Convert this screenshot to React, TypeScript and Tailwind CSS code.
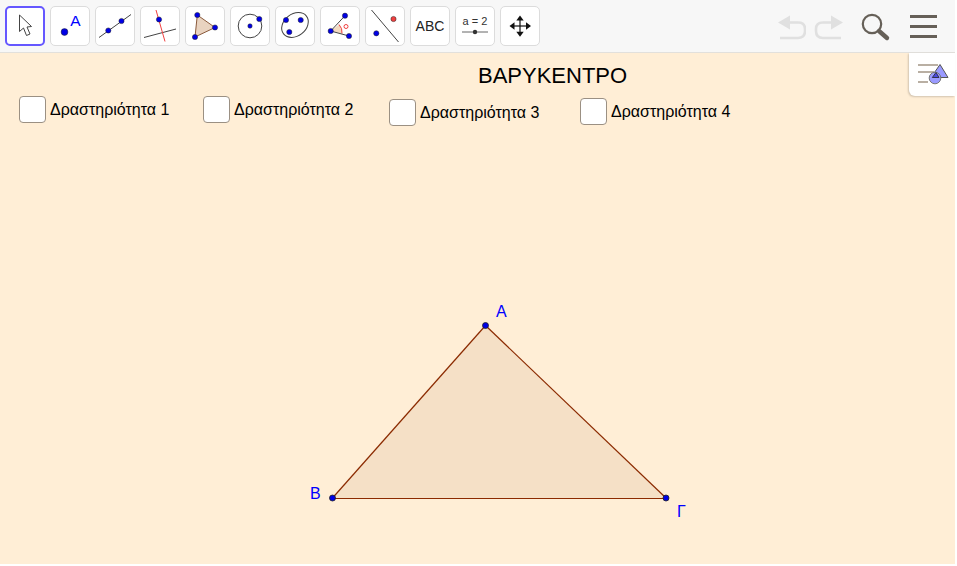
import React from "react";

const BLUE = "#0000e6";
const P = ({ x, y, r = 2.6, c = BLUE }: { x: number; y: number; r?: number; c?: string }) => (
  <circle cx={x} cy={y} r={r} fill={c} stroke="#222" strokeWidth={0.5} />
);

const L = ({ x1, y1, x2, y2, c = "#444", w = 1 }: { x1: number; y1: number; x2: number; y2: number; c?: string; w?: number }) => (
  <line x1={x1} y1={y1} x2={x2} y2={y2} stroke={c} strokeWidth={w} />
);

// Each icon is drawn in page coordinates; the viewBox is the tile's own box.
const icons: { x: number; active?: boolean; g: React.ReactNode }[] = [
  {
    x: 5,
    active: true,
    g: <path d="M19.5 15 L19.5 31.5 L23.5 28 L26.5 35.5 L30 34 L27 27 L31.5 26.5 Z" fill="#fff" stroke="#444" strokeWidth={1} strokeLinejoin="round" />,
  },
  {
    x: 50,
    g: (
      <>
        <circle cx={64.5} cy={32} r={3.4} fill={BLUE} stroke="#222" strokeWidth={0.5} />
        <text x={75.5} y={25.5} textAnchor="middle" fontSize={15.5} fill="#0000ff" fontFamily="Liberation Sans, sans-serif">A</text>
      </>
    ),
  },
  {
    x: 95,
    g: (
      <>
        <L x1={99} y1={37.5} x2={131} y2={14.5} />
        <P x={108.3} y={30.5} />
        <P x={121.5} y={21} />
      </>
    ),
  },
  {
    x: 140,
    g: (
      <>
        <L x1={144} y1={37.5} x2={176} y2={29} />
        <L x1={156} y1={10} x2={165} y2={41.5} c="#f04040" />
        <P x={159} y={19.5} />
      </>
    ),
  },
  {
    x: 185,
    g: (
      <>
        <polygon points="197.3,15 215,27.5 195,37" fill="#e9d3c0" stroke="#8a5a3c" strokeWidth={1} />
        <P x={197.3} y={15} />
        <P x={215} y={27.5} />
        <P x={195} y={37} />
      </>
    ),
  },
  {
    x: 230,
    g: (
      <>
        <circle cx={250} cy={26} r={11.8} fill="none" stroke="#444" strokeWidth={1} />
        <P x={250} y={26} r={2.2} />
        <P x={259.3} y={19} />
      </>
    ),
  },
  {
    x: 275,
    g: (
      <>
        <ellipse cx={295} cy={25} rx={14.5} ry={11} transform="rotate(-38 295 25)" fill="none" stroke="#444" strokeWidth={1} />
        <P x={286} y={20} />
        <P x={300.7} y={20} />
        <P x={289.3} y={32} />
      </>
    ),
  },
  {
    x: 320,
    g: (
      <>
        <path d="M330.7 31 L339 24.5 A11 11 0 0 1 342 33.5 Z" fill="#f3d9c0" />
        <path d="M339 24.5 A11 11 0 0 1 342 33.5" fill="none" stroke="#f04040" strokeWidth={1} />
        <L x1={330.7} y1={31} x2={345} y2={15.7} />
        <L x1={330.7} y1={31} x2={349} y2={36} />
        <P x={345} y={15.7} />
        <P x={330.7} y={31} />
        <P x={349} y={36} />
        <circle cx={346} cy={26.5} r={2} fill="none" stroke="#f04040" strokeWidth={1} />
      </>
    ),
  },
  {
    x: 365,
    g: (
      <>
        <L x1={371.5} y1={10} x2={398.5} y2={42} />
        <P x={393.5} y={19} c="#f04040" />
        <P x={376.3} y={33.3} />
      </>
    ),
  },
  {
    x: 410,
    g: <text x={430} y={31} textAnchor="middle" fontSize={14} fill="#222" fontFamily="Liberation Sans, sans-serif">ABC</text>,
  },
  {
    x: 455,
    g: (
      <>
        <text x={475} y={25} textAnchor="middle" fontSize={11} fill="#333" fontFamily="Liberation Sans, sans-serif">a = 2</text>
        <L x1={462} y1={32} x2={488} y2={32} c="#666" />
        <circle cx={475} cy={32} r={2.2} fill="#333" />
      </>
    ),
  },
  {
    x: 500,
    g: (
      <>
        <L x1={520} y1={18} x2={520} y2={34} c="#111" w={1.2} />
        <L x1={512} y1={26} x2={528} y2={26} c="#111" w={1.2} />
        <polygon points="520,15.5 516.3,20.5 523.7,20.5" fill="#111" />
        <polygon points="520,36.7 516.3,31.7 523.7,31.7" fill="#111" />
        <polygon points="509.5,26 514.5,22.3 514.5,29.7" fill="#111" />
        <polygon points="531,26 526,22.3 526,29.7" fill="#111" />
      </>
    ),
  },
];

const activities = [
  { label: "Δραστηριότητα 1", x: 19, y: 96, text: "" },
  { label: "Δραστηριότητα 2", x: 203, y: 96, text: "" },
  { label: "Δραστηριότητα 3", x: 389, y: 98, text: "pt-[1px]" },
  { label: "Δραστηριότητα 4", x: 580, y: 97, text: "pt-[1px]" },
];

export default function App() {
  return (
    <div className="w-[957px] h-[566px] bg-white overflow-hidden font-['Liberation_Sans',Arial,sans-serif]">
      <div className="w-[955px] h-[564px] flex flex-col bg-[#ffeed6]">
        <header className="h-[53px] shrink-0 flex items-start bg-[#f7f7f7] border-b border-[#e2e0dc] pl-[5px] pt-[6px] gap-[5px]">
          {icons.map((ic) => (
            <button
              key={ic.x}
              className={
                ic.active
                  ? "w-10 h-10 shrink-0 rounded-[5px] bg-white border-2 border-[#6557ff]"
                  : "w-10 h-10 shrink-0 rounded-[5px] bg-white border border-[#dcdcdc]"
              }
            >
              <svg
                className={ic.active ? "block w-10 h-10 -m-[2px]" : "block w-10 h-10 -m-px"}
                viewBox={`${ic.x} 6 40 40`}
              >
                {ic.g}
              </svg>
            </button>
          ))}

          <div className="ml-auto flex items-center h-10 pr-[18px]">
            <svg width="30" height="28" viewBox="776 12 30 28" className="mr-[7px]">
              <path d="M785 22.5 H798 Q805 22.5 805 29 V31 Q805 38 798 38 H780" fill="none" stroke="#e0e0e0" strokeWidth={2.6} />
              <polygon points="778,22.5 790,15.5 790,29.5" fill="#e0e0e0" />
            </svg>
            <svg width="30" height="28" viewBox="813 12 30 28" className="mr-[17px]">
              <path d="M836 22.5 H823 Q816 22.5 816 29 V31 Q816 38 823 38 H841" fill="none" stroke="#e0e0e0" strokeWidth={2.6} />
              <polygon points="843,22.5 831,15.5 831,29.5" fill="#e0e0e0" />
            </svg>
            <svg width="32" height="32" viewBox="860 10 32 32" className="mr-[18px]">
              <circle cx={872} cy={24} r={9.2} fill="none" stroke="#666058" strokeWidth={2.2} />
              <line x1={879} y1={31} x2={887} y2={38} stroke="#666058" strokeWidth={4.4} strokeLinecap="round" />
            </svg>
            <div className="flex flex-col gap-[7px] w-[27px]">
              <div className="h-[3px] bg-[#666058]" />
              <div className="h-[3px] bg-[#666058]" />
              <div className="h-[3px] bg-[#666058]" />
            </div>
          </div>
        </header>

        <main className="relative flex-1">
          <svg className="absolute left-0 top-0" width="955" height="511" viewBox="0 53 955 511">
            <polygon points="485.5,325.5 332.5,498 666,498" fill="#f5e0c6" />
            <line x1={485.5} y1={325.5} x2={332.5} y2={498} stroke="#8b2a00" strokeWidth={1.2} />
            <line x1={485.5} y1={325.5} x2={666} y2={498} stroke="#8b2a00" strokeWidth={1.2} />
            <line x1={332.5} y1={498.5} x2={666} y2={498.5} stroke="#8b2a00" strokeWidth={1.2} />
            <circle cx={485.5} cy={325.5} r={3} fill={BLUE} stroke="#222" strokeWidth={0.8} />
            <circle cx={332.5} cy={498} r={3} fill={BLUE} stroke="#222" strokeWidth={0.8} />
            <circle cx={666} cy={498} r={3} fill={BLUE} stroke="#222" strokeWidth={0.8} />
            <text x={496} y={317} fontSize={16} fill="#0000ff" fontFamily="Liberation Sans, sans-serif">Α</text>
            <text x={310} y={499} fontSize={16} fill="#0000ff" fontFamily="Liberation Sans, sans-serif">Β</text>
            <text x={677} y={517} fontSize={16} fill="#0000ff" fontFamily="Liberation Sans, sans-serif">Γ</text>
          </svg>

          <div className="absolute left-[478px] top-[10px] text-[22px] leading-[26px] text-black">ΒΑΡΥΚΕΝΤΡΟ</div>

          {activities.map((a) => (
            <label
              key={a.label}
              className="absolute flex items-center gap-[4px] text-[16px] leading-[27px] text-black"
              style={{ left: a.x, top: a.y - 53 }}
            >
              <span className="block w-[27px] h-[27px] rounded-[4px] bg-white border-[1.5px] border-[#9b9083]" />
              <span className={a.text}>{a.label}</span>
            </label>
          ))}

          <div className="absolute right-0 top-0 w-[46px] h-[43px] bg-white rounded-bl-[6px] shadow-[-1px_1px_2px_rgba(0,0,0,0.18)]">
            <svg width="46" height="43" viewBox="909 53 46 43" className="block">
              <line x1={918} y1={65} x2={938} y2={65} stroke="#a89c8c" strokeWidth={1.6} />
              <line x1={918} y1={72} x2={934} y2={72} stroke="#a89c8c" strokeWidth={1.6} />
              <line x1={918} y1={82} x2={928} y2={82} stroke="#a89c8c" strokeWidth={1.6} />
              <polygon points="940,64.5 948,77.5 931,77.5" fill="#9a9aff" stroke="#555" strokeWidth={1} />
              <circle cx={935} cy={78} r={5.8} fill="#9a9aff" stroke="#777" strokeWidth={1} />
              <path d="M932.3 77.5 L936 72.5 L939 77.5 Z" fill="#4a4ae0" stroke="#222" strokeWidth={0.8} />
            </svg>
          </div>
        </main>
      </div>
    </div>
  );
}
